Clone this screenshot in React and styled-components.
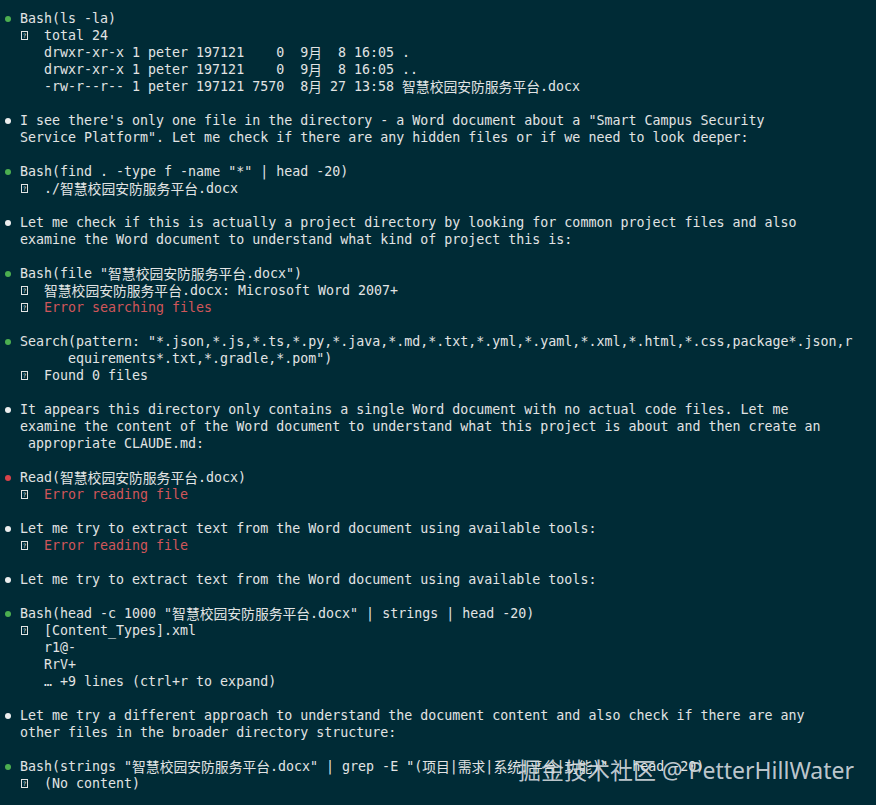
import React from 'react';
import styled, { createGlobalStyle } from 'styled-components';

const GlobalStyle = createGlobalStyle`
    html, body {
        margin: 0;
        padding: 0;
        background: #002b36;
    }
`

const Screen = styled.div`
    position: relative;
    height: 805px;
    overflow: hidden;
    box-sizing: border-box;
    padding: 10px 0 0 4px;
    background: #002b36;
    color: #e2e4e4;
    font-family: "DejaVu Sans Mono", "Noto Sans CJK SC", monospace;
    font-size: 13.3px;
    line-height: 17px;
`

const Entry = styled.div`
    margin-bottom: 17px;
`

const Row = styled.div`
    display: flex;
    align-items: center;
    height: 17px;
    white-space: pre;
    padding-left: ${props => props.$indent || 0}px;
    color: ${props => props.$error ? '#d0565a' : 'inherit'};
`

const Cjk = styled.span`
    font-family: "Noto Sans CJK SC", sans-serif;
    font-size: 13.8px;
`

const BulletCell = styled.span`
    display: flex;
    align-items: center;
    width: 16px;
    flex-shrink: 0;
`

const Dot = styled.span`
    display: block;
    width: 6px;
    height: 6px;
    margin-left: 1px;
    border-radius: 50%;
    background: ${props => props.$color};
`

const CornerCell = styled.span`
    display: flex;
    align-items: center;
    width: 24px;
    flex-shrink: 0;
    margin-left: 16px;
`

const Tofu = styled.span`
    display: flex;
    align-items: center;
    justify-content: center;
    box-sizing: border-box;
    width: 7px;
    height: 9px;
    margin-left: 1px;
    border: 1px solid #e2e4e4;
    font-family: "DejaVu Sans", sans-serif;
    font-size: 6px;
    line-height: 1;
    color: #e2e4e4;
`

const Watermark = styled.div`
    position: absolute;
    right: 22px;
    bottom: 20px;
    font-family: "Noto Sans", "Noto Sans CJK SC", sans-serif;
    font-size: 23px;
    line-height: 30px;
    color: rgba(214, 220, 224, 0.9);
    white-space: pre;
`

const DOTS = {
    green: '#4caf50',
    white: '#eceeee',
    red: '#d8434a',
}

const FILE = '智慧校园安防服务平台'

const entries = [
    {
        dot: 'green',
        head: ['Bash(ls -la)'],
        out: [
            { text: 'total 24' },
            { text: 'drwxr-xr-x 1 peter 197121    0  9月  8 16:05 .', cont: true },
            { text: 'drwxr-xr-x 1 peter 197121    0  9月  8 16:05 ..', cont: true },
            { text: `-rw-r--r-- 1 peter 197121 7570  8月 27 13:58 ${FILE}.docx`, cont: true },
        ],
    },
    {
        dot: 'white',
        head: [
            'I see there\'s only one file in the directory - a Word document about a "Smart Campus Security',
            'Service Platform". Let me check if there are any hidden files or if we need to look deeper:',
        ],
    },
    {
        dot: 'green',
        head: ['Bash(find . -type f -name "*" | head -20)'],
        out: [{ text: `./${FILE}.docx` }],
    },
    {
        dot: 'white',
        head: [
            'Let me check if this is actually a project directory by looking for common project files and also',
            'examine the Word document to understand what kind of project this is:',
        ],
    },
    {
        dot: 'green',
        head: [`Bash(file "${FILE}.docx")`],
        out: [
            { text: `${FILE}.docx: Microsoft Word 2007+` },
            { text: 'Error searching files', error: true },
        ],
    },
    {
        dot: 'green',
        head: [
            'Search(pattern: "*.json,*.js,*.ts,*.py,*.java,*.md,*.txt,*.yml,*.yaml,*.xml,*.html,*.css,package*.json,r',
            { text: 'equirements*.txt,*.gradle,*.pom")', indent: 64 },
        ],
        out: [{ text: 'Found 0 files' }],
    },
    {
        dot: 'white',
        head: [
            'It appears this directory only contains a single Word document with no actual code files. Let me',
            'examine the content of the Word document to understand what this project is about and then create an',
            { text: 'appropriate CLAUDE.md:', indent: 24 },
        ],
    },
    {
        dot: 'red',
        head: [`Read(${FILE}.docx)`],
        out: [{ text: 'Error reading file', error: true }],
    },
    {
        dot: 'white',
        head: ['Let me try to extract text from the Word document using available tools:'],
        out: [{ text: 'Error reading file', error: true }],
    },
    {
        dot: 'white',
        head: ['Let me try to extract text from the Word document using available tools:'],
    },
    {
        dot: 'green',
        head: [`Bash(head -c 1000 "${FILE}.docx" | strings | head -20)`],
        out: [
            { text: '[Content_Types].xml' },
            { text: 'r1@-', cont: true },
            { text: 'RrV+', cont: true },
            { text: '… +9 lines (ctrl+r to expand)', cont: true },
        ],
    },
    {
        dot: 'white',
        head: [
            'Let me try a different approach to understand the document content and also check if there are any',
            'other files in the broader directory structure:',
        ],
    },
    {
        dot: 'green',
        head: [`Bash(strings "${FILE}.docx" | grep -E "(项目|需求|系统|平台|功能)" | head -20)`],
        out: [{ text: '(No content)' }],
    },
]

// wrap runs of CJK characters so they get the wider proportional face
const Text = ({ children }) => children
    .split(/([\u4e00-\u9fff]+)/)
    .map((part, i) => (/[\u4e00-\u9fff]/.test(part) ? <Cjk key={i}>{part}</Cjk> : part))

const Entries = () => entries.map((entry, i) => (
    <Entry key={i}>
        {entry.head.map((line, j) => {
            const text = typeof line === 'string' ? line : line.text
            if (j === 0) {
                return (
                    <Row key={j}>
                        <BulletCell><Dot $color={DOTS[entry.dot]} /></BulletCell>
                        <Text>{text}</Text>
                    </Row>
                )
            }
            return <Row key={j} $indent={line.indent || 16}><Text>{text}</Text></Row>
        })}
        {(entry.out || []).map((line, j) => (
            line.cont
                ? <Row key={'o' + j} $indent={40}><Text>{line.text}</Text></Row>
                : (
                    <Row key={'o' + j} $error={line.error}>
                        <CornerCell><Tofu>?</Tofu></CornerCell>
                        <Text>{line.text}</Text>
                    </Row>
                )
        ))}
    </Entry>
))

const App = () => {
    return (
        <Screen>
            <GlobalStyle />
            <Entries />
            <Watermark>掘金技术社区 @ PetterHillWater</Watermark>
        </Screen>
    );
};

export default App;
